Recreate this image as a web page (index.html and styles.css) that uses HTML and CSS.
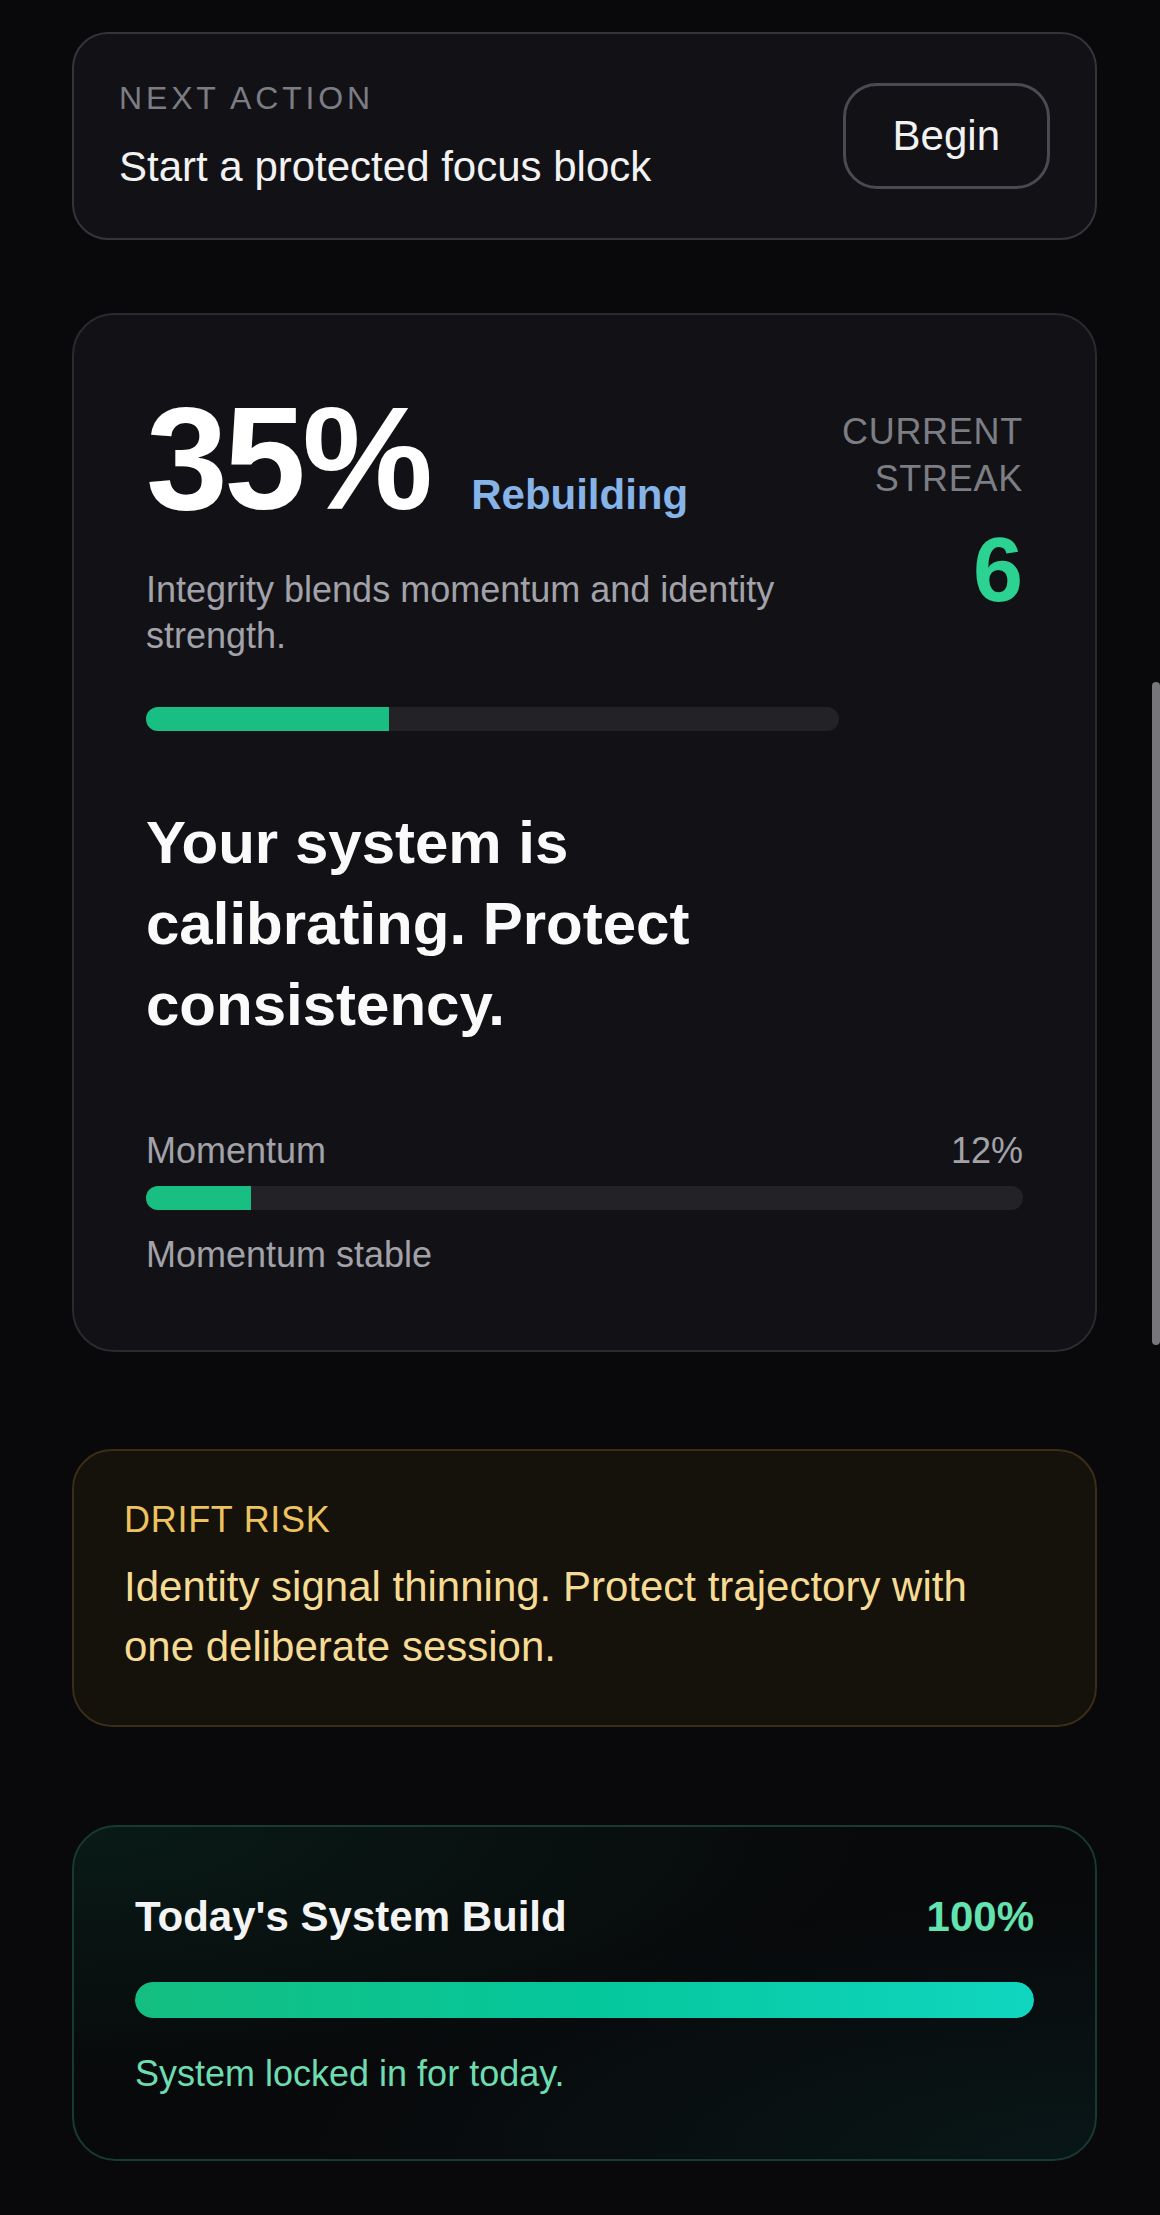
FILE: index.html
```html
<!DOCTYPE html>
<html lang="en">
<head>
  <meta charset="UTF-8" />
  <title>System — Integrity</title>
  <link rel="stylesheet" href="styles.css">
</head>
<body>
  <div class="page">
    <section class="card next-card">
      <div class="next-text">
        <div class="next-label">NEXT ACTION</div>
        <div class="next-title">Start a protected focus block</div>
      </div>
      <button class="btn-begin">Begin</button>
    </section>

    <section class="card score-card">
      <div class="score-top">
        <div class="score-main">
          <div class="score-row">
            <span class="score-value">35%</span>
            <span class="score-state">Rebuilding</span>
          </div>
          <p class="score-desc">Integrity blends momentum and identity strength.</p>
          <div class="bar"><div class="bar-fill" style="width: 35%"></div></div>
        </div>
        <div class="streak">
          <div class="streak-label">CURRENT STREAK</div>
          <div class="streak-value">6</div>
        </div>
      </div>

      <h2 class="score-headline">Your system is calibrating. Protect consistency.</h2>

      <div class="metric">
        <div class="metric-head">
          <span>Momentum</span>
          <span>12%</span>
        </div>
        <div class="bar"><div class="bar-fill" style="width: 12%"></div></div>
        <div class="metric-note">Momentum stable</div>
      </div>
    </section>

    <section class="drift-card">
      <div class="drift-label">DRIFT RISK</div>
      <p class="drift-text">Identity signal thinning. Protect trajectory with one deliberate session.</p>
    </section>

    <section class="build-card">
      <div class="build-head">
        <span class="build-title">Today's System Build</span>
        <span class="build-value">100%</span>
      </div>
      <div class="build-bar"><div class="build-fill" style="width: 100%"></div></div>
      <div class="build-note">System locked in for today.</div>
    </section>
  </div>

  <div class="scroll-thumb"></div>
</body>
</html>
```

FILE: styles.css
```css
html, body {
  margin: 0;
  padding: 0;
}

body {
  font-family: "Liberation Sans", Arial, sans-serif;
  background-color: #09090b;
  color: #f4f4f5;
}

.page {
  padding: 32px 63px 52px 72px;
}

.card {
  background: #121216;
  border: 2px solid #2a2a2f;
  border-radius: 42px;
}

/* next action */

.next-card {
  display: flex;
  align-items: center;
  justify-content: space-between;
  padding: 44px 45px;
  border-color: #34343a;
  border-radius: 36px;
}

.next-label {
  font-size: 32px;
  line-height: 1.3;
  letter-spacing: 0.12em;
  color: #7c7c84;
}

.next-title {
  margin-top: 20px;
  font-size: 42px;
  line-height: 1.3;
  color: #f2f2f3;
}

.btn-begin {
  font-family: inherit;
  font-size: 42px;
  color: #f2f2f3;
  background: transparent;
  border: 3px solid #4a4a52;
  border-radius: 34px;
  padding: 26px 47px;
  cursor: pointer;
}

/* integrity score */

.score-card {
  margin-top: 73px;
  padding: 70px 72px 72px;
}

.score-top {
  display: flex;
}

.score-main {
  flex: 1;
}

.score-row {
  display: flex;
  align-items: baseline;
  gap: 42px;
}

.score-value {
  font-size: 147px;
  font-weight: 700;
  line-height: 1;
  letter-spacing: -0.025em;
  color: #ffffff;
}

.score-state {
  font-size: 42px;
  font-weight: 700;
  color: #86b3e8;
}

.score-desc {
  margin: 35px 0 0;
  font-size: 36px;
  line-height: 46px;
  color: #a2a2aa;
}

.bar {
  height: 24px;
  border-radius: 12px;
  background: #222227;
  overflow: hidden;
}

.score-main .bar {
  margin-top: 48px;
}

.bar-fill {
  height: 100%;
  background: #19bf82;
}

.streak {
  width: 184px;
  margin-top: 24px;
  text-align: right;
}

.streak-label {
  font-size: 36px;
  line-height: 1.3;
  letter-spacing: 0.02em;
  color: #7d7d84;
}

.streak-value {
  margin-top: 22px;
  font-size: 90px;
  font-weight: 700;
  line-height: 1;
  color: #2bd292;
}

.score-headline {
  max-width: 700px;
  margin: 71px 0 0;
  font-size: 60px;
  line-height: 81px;
  font-weight: 700;
  color: #fafafa;
}

.metric {
  margin-top: 83px;
}

.metric-head {
  display: flex;
  justify-content: space-between;
  font-size: 36px;
  line-height: 46px;
  color: #a2a2aa;
}

.metric .bar {
  margin-top: 12px;
}

.metric-note {
  margin-top: 22px;
  font-size: 36px;
  line-height: 46px;
  color: #a2a2aa;
}

/* drift risk */

.drift-card {
  margin-top: 97px;
  padding: 46px 50px 48px;
  background: #15110b;
  border: 2px solid #3b2d17;
  border-radius: 40px;
}

.drift-label {
  font-size: 36px;
  line-height: 1.3;
  letter-spacing: 0.02em;
  color: #ecc35f;
}

.drift-text {
  max-width: 870px;
  margin: 13px 0 0;
  font-size: 42px;
  line-height: 60px;
  color: #f5db93;
}

/* today's build */

.build-card {
  margin-top: 98px;
  padding: 63px 61px 61px;
  border: 2px solid #173a31;
  border-radius: 44px;
  background:
    radial-gradient(ellipse at top left, rgba(16, 185, 129, 0.10), transparent 55%),
    radial-gradient(ellipse at bottom right, rgba(20, 184, 166, 0.08), transparent 55%),
    #08090b;
}

.build-head {
  display: flex;
  justify-content: space-between;
  align-items: baseline;
  font-size: 42px;
  line-height: 53px;
  font-weight: 700;
}

.build-title {
  color: #f4f4f5;
}

.build-value {
  color: #63e3b0;
}

.build-bar {
  margin-top: 39px;
  height: 36px;
  border-radius: 18px;
  background: #1b1f22;
  overflow: hidden;
}

.build-fill {
  height: 100%;
  border-radius: 18px;
  background: linear-gradient(90deg, #14be80, #05c79c 50%, #10d6c0);
}

.build-note {
  margin-top: 33px;
  font-size: 36px;
  line-height: 1.3;
  color: #6ddcb0;
}

.scroll-thumb {
  position: fixed;
  top: 682px;
  right: 0;
  width: 8px;
  height: 663px;
  border-radius: 4px;
  background: #77777b;
}
```
